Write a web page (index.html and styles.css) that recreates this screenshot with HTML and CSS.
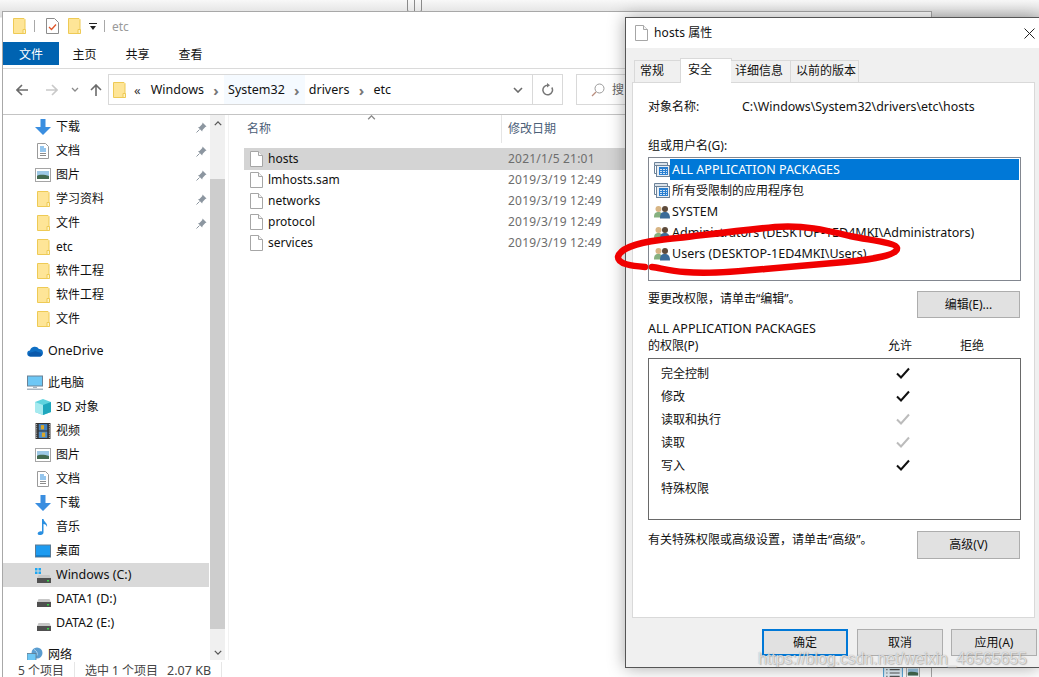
FILE: index.html
```html
<!DOCTYPE html>
<html lang="zh">
<head>
<meta charset="utf-8">
<title>hosts 属性</title>
<link rel="stylesheet" href="styles.css">
</head>
<body>
<svg class="defs" width="0" height="0" aria-hidden="true">
  <symbol id="i-folder" viewBox="0 0 13 16"><path d="M.5.5h10.5l1 1v14H.5z" fill="#fee597" stroke="#eeca55"/><path d="M10 11.500h2.500V15.500H10z" fill="#fff3c4" stroke="#eeca55"/></symbol>
  <symbol id="i-file" viewBox="0 0 13 16"><path d="M.5.5h8l4 4v11H.500z" fill="#fff" stroke="#a6a6a6"/><path d="M8.500.5v4h4" fill="#f4f4f4" stroke="#a6a6a6"/></symbol>
  <symbol id="i-check-doc" viewBox="0 0 13 16"><path d="M.5.5h8l4 4v11H.500z" fill="#fff" stroke="#8c8c8c"/><path d="M3 9l2.500 2.500L10 6.500" fill="none" stroke="#e0562a" stroke-width="1.300"/></symbol>
  <symbol id="i-down" viewBox="0 0 16 16"><path d="M5.500 0h5v8H16l-8 8-8-8h5.500z" fill="#3a8ee0"/></symbol>
  <symbol id="i-doc" viewBox="0 0 16 16"><path d="M2.500.5h8l3 3v12h-11z" fill="#fff" stroke="#9a9a9a"/><path d="M5 4h4M5 6h6M5 8h6" stroke="#2b8ddd"/><path d="M5 10.500h6M5 12.500h6" stroke="#8c8c8c"/></symbol>
  <symbol id="i-pic" viewBox="0 0 16 14"><rect x=".5" y=".5" width="15" height="13" fill="#fff" stroke="#a5a5a5"/><rect x="2" y="3" width="12" height="8" fill="#9cc8e6"/><path d="M2 8c3-2 8-1 12 0v3H2z" fill="#42694f"/></symbol>
  <symbol id="i-pin" viewBox="0 0 11 11"><path d="M6.500.5l4 4-1.200.6-2.800 2.900-.3 1.500L2 5.200l1.500-.3L6.300 2z" fill="#8c96a0"/><path d="M3.500 7.500L.5 10.500" stroke="#8c96a0"/></symbol>
  <symbol id="i-cloud" viewBox="0 0 16 12"><path d="M3.500 11.500a3 3 0 0 1-.5-6A5 5 0 0 1 12 4a3.800 3.800 0 0 1 1 7.500z" fill="#0f6fc4"/><path d="M3.500 11.500a2 2 0 0 1 0-4c2 0 4-2 6-1s3 .5 4.500 1.500 1 3.500-1 3.500z" fill="#0a59ab"/></symbol>
  <symbol id="i-pc" viewBox="0 0 16 15"><rect x=".5" y=".5" width="15" height="10" fill="#6dc7f5" stroke="#6a8296"/><path d="M6 11h4v1.500H6z" fill="#a6b4c0"/><path d="M0 13h16v1.500H0z" fill="#a6b4c0"/></symbol>
  <symbol id="i-cube" viewBox="0 0 16 16"><path d="M8 0l8 3v10l-8 3-8-3V3z" fill="#5fd3de"/><path d="M8 6l8-3v10l-8 3z" fill="#1fa7bd"/><path d="M0 3l8 3v10l-8-3z" fill="#a6eaef"/></symbol>
  <symbol id="i-film" viewBox="0 0 14 15"><rect width="14" height="15" fill="#333"/><rect x="3" y="1" width="8" height="6" fill="#3f7fc0"/><rect x="3" y="8" width="8" height="6" fill="#4d8cc8"/><path d="M5 2h3v4H5z" fill="#d8a628"/><path d="M6 9h3v4H6z" fill="#d8a628"/><path d="M1 1v13" stroke="#bbb" stroke-dasharray="1 1"/><path d="M13 1v13" stroke="#bbb" stroke-dasharray="1 1"/></symbol>
  <symbol id="i-note" viewBox="0 0 12 16"><path d="M5 0h1.500c.3 3 4.500 4 3.500 8-.5-2-2-3-3.500-3v8.500c0 2-2 2.500-4 2.500S0 14 1.500 13 4 12 5 12.500z" fill="#2a8fe0"/></symbol>
  <symbol id="i-desk" viewBox="0 0 16 13"><rect x=".5" y=".5" width="15" height="12" fill="#1d9bf0" stroke="#5c7a92"/><path d="M1 11h14v1H1z" fill="#0b66b0"/></symbol>
  <symbol id="i-drive" viewBox="0 0 14 8"><path d="M1.500 0h11L14 3.500H0z" fill="#c7c7c7"/><rect y="3" width="14" height="5" fill="#505050"/><rect x="10" y="5" width="2" height="1.500" fill="#37d648"/></symbol>
  <symbol id="i-win" viewBox="0 0 6 6"><path d="M0 0h2.500v2.500H0zM3.500 0H6v2.500H3.500zM0 3.500h2.500V6H0zM3.500 3.500H6V6H3.500z" fill="#1ea7f2"/></symbol>
  <symbol id="i-net" viewBox="0 0 16 15"><circle cx="10" cy="5.500" r="5.500" fill="#5a9dd0"/><path d="M7 2c2 1 4 3 3 6" stroke="#b9dcf2" fill="none"/><rect y="6" width="9" height="7" fill="#6dc7f5" stroke="#5d7a90" stroke-width=".8"/><path d="M2 14h5" stroke="#8c9aa6"/></symbol>
  <symbol id="i-pkg" viewBox="0 0 16 16"><path d="M.5.500h13v3H.5z" fill="#dbe3ea" stroke="#6d8298"/><path d="M.5 3.500v8h2" fill="none" stroke="#6d8298"/><rect x="2.500" y="3.500" width="13" height="11" fill="#e9eef3" stroke="#6d8298"/><rect x="5" y="5" width="9" height="8" fill="#2a7fd0"/><path d="M6 7.500h7M6 9.500h7M6 11.500h7" stroke="#cfe3f5" stroke-dasharray="2 1"/></symbol>
  <symbol id="i-users" viewBox="0 0 16 15"><circle cx="4.500" cy="4.500" r="3" fill="#d8b584"/><path d="M0 13c0-5 2-5.500 4.500-5.500S9 9 9 13z" fill="#86b07f"/><circle cx="11" cy="4.500" r="3" fill="#5d4a3a"/><path d="M6 14c0-6 2-6.500 5-6.500S16 9 16 14z" fill="#3b6b98"/></symbol>
  <symbol id="i-check" viewBox="0 0 14 12"><path d="M1 6.500l4 4L13 1.500" fill="none" stroke="currentColor" stroke-width="2"/></symbol>
  <symbol id="i-caret" viewBox="0 0 10 6"><path d="M1 5l4-4 4 4" fill="none" stroke="currentColor" stroke-width="1.600"/></symbol>
</svg>

<div class="book"></div>

<section class="explorer">
  <header class="qat">
    <svg class="ic13"><use href="#i-folder"/></svg>
    <span class="qsep"></span>
    <svg class="ic13 qdoc"><use href="#i-check-doc"/></svg>
    <svg class="ic13"><use href="#i-folder"/></svg>
    <span class="qdrop"></span>
    <span class="qsep"></span>
    <span class="qtitle">etc</span>
  </header>
  <nav class="ribbon">
    <span class="rtab active">文件</span>
    <span class="rtab">主页</span>
    <span class="rtab">共享</span>
    <span class="rtab">查看</span>
  </nav>
  <div class="navbar">
    <svg class="nav-arrow" viewBox="0 0 12 12"><path d="M6 1L1 6l5 5M1 6h11" fill="none" stroke="#6b6b6b" stroke-width="1.600"/></svg>
    <svg class="nav-arrow fwd" viewBox="0 0 12 12"><path d="M6 1l5 5-5 5M11 6H0" fill="none" stroke="#c9c9c9" stroke-width="1.600"/></svg>
    <svg class="nav-drop" viewBox="0 0 8 5"><path d="M1 1l3 3 3-3" fill="none" stroke="#8a8a8a" stroke-width="1.300"/></svg>
    <svg class="nav-arrow up" viewBox="0 0 12 12"><path d="M1 6l5-5 5 5M6 1v11" fill="none" stroke="#6b6b6b" stroke-width="1.600"/></svg>
    <div class="address">
      <svg class="ic13"><use href="#i-folder"/></svg>
      <span class="more">«</span>
      <span class="crumb first">Windows</span><span class="gt">›</span>
      <span class="crumb hover">System32</span><span class="gt hover">›</span>
      <span class="crumb">drivers</span><span class="gt">›</span>
      <span class="crumb">etc</span>
      <svg class="addr-drop" viewBox="0 0 10 6"><path d="M1 1l4 4 4-4" fill="none" stroke="#6b6b6b" stroke-width="1.600"/></svg>
    </div>
    <div class="refresh"><svg viewBox="0 0 12 13" width="12" height="13"><path d="M9.800 4.500A4.800 4.800 0 1 1 6 2.200" fill="none" stroke="#777" stroke-width="1.500"/><path d="M5 0l3 2.200L5 4.500z" fill="#777"/></svg></div>
    <div class="search"><svg viewBox="0 0 14 14" width="14" height="14"><circle cx="8.500" cy="5.500" r="4.500" fill="none" stroke="#9a9a9a"/><path d="M5 9l-4 4" stroke="#b98d7e" stroke-width="1.300"/></svg><span class="stext">搜</span></div>
  </div>
  <div class="main">
    <aside class="sidebar">
      <div class="tree">
        <div class="node sub"><svg class="ni"><use href="#i-down"/></svg><span class="nlabel">下载</span><svg class="pin"><use href="#i-pin"/></svg></div>
        <div class="node sub"><svg class="ni"><use href="#i-doc"/></svg><span class="nlabel">文档</span><svg class="pin"><use href="#i-pin"/></svg></div>
        <div class="node sub"><svg class="ni pic"><use href="#i-pic"/></svg><span class="nlabel">图片</span><svg class="pin"><use href="#i-pin"/></svg></div>
        <div class="node sub"><svg class="ni fold"><use href="#i-folder"/></svg><span class="nlabel">学习资料</span><svg class="pin"><use href="#i-pin"/></svg></div>
        <div class="node sub"><svg class="ni fold"><use href="#i-folder"/></svg><span class="nlabel">文件</span><svg class="pin"><use href="#i-pin"/></svg></div>
        <div class="node sub"><svg class="ni fold"><use href="#i-folder"/></svg><span class="nlabel">etc</span></div>
        <div class="node sub"><svg class="ni fold"><use href="#i-folder"/></svg><span class="nlabel">软件工程</span></div>
        <div class="node sub"><svg class="ni fold"><use href="#i-folder"/></svg><span class="nlabel">软件工程</span></div>
        <div class="node sub"><svg class="ni fold"><use href="#i-folder"/></svg><span class="nlabel">文件</span></div>
        <div class="node top gap"><svg class="ni"><use href="#i-cloud"/></svg><span class="nlabel lat">OneDrive</span></div>
        <div class="node top gap"><svg class="ni"><use href="#i-pc"/></svg><span class="nlabel">此电脑</span></div>
        <div class="node sub"><svg class="ni"><use href="#i-cube"/></svg><span class="nlabel">3D 对象</span></div>
        <div class="node sub"><svg class="ni"><use href="#i-film"/></svg><span class="nlabel">视频</span></div>
        <div class="node sub"><svg class="ni pic"><use href="#i-pic"/></svg><span class="nlabel">图片</span></div>
        <div class="node sub"><svg class="ni"><use href="#i-doc"/></svg><span class="nlabel">文档</span></div>
        <div class="node sub"><svg class="ni"><use href="#i-down"/></svg><span class="nlabel">下载</span></div>
        <div class="node sub"><svg class="ni"><use href="#i-note"/></svg><span class="nlabel">音乐</span></div>
        <div class="node sub"><svg class="ni"><use href="#i-desk"/></svg><span class="nlabel">桌面</span></div>
        <div class="node sub selected"><span class="ni drivewrap"><svg class="winlogo"><use href="#i-win"/></svg><svg class="drive"><use href="#i-drive"/></svg></span><span class="nlabel lat">Windows (C:)</span></div>
        <div class="node sub"><span class="ni drivewrap"><svg class="drive"><use href="#i-drive"/></svg></span><span class="nlabel lat">DATA1 (D:)</span></div>
        <div class="node sub"><span class="ni drivewrap"><svg class="drive"><use href="#i-drive"/></svg></span><span class="nlabel lat">DATA2 (E:)</span></div>
        <div class="node top gap"><svg class="ni"><use href="#i-net"/></svg><span class="nlabel">网络</span></div>
      </div>
      <div class="scrollbar">
        <div class="sb-btn"><svg class="sb-caret"><use href="#i-caret"/></svg></div>
        <div class="sb-gap"></div>
        <div class="sb-thumb"></div>
        <div class="sb-btn bottom"><svg class="sb-caret flip"><use href="#i-caret"/></svg></div>
      </div>
    </aside>
    <div class="files">
      <div class="fhead">
        <span class="col-name">名称</span>
        <svg class="sort"><use href="#i-caret"/></svg>
        <span class="col-date">修改日期</span>
      </div>
      <div class="frow selected"><svg class="fi"><use href="#i-file"/></svg><span class="fname">hosts</span><span class="fdate">2021/1/5 21:01</span></div>
      <div class="frow"><svg class="fi"><use href="#i-file"/></svg><span class="fname">lmhosts.sam</span><span class="fdate">2019/3/19 12:49</span></div>
      <div class="frow"><svg class="fi"><use href="#i-file"/></svg><span class="fname">networks</span><span class="fdate">2019/3/19 12:49</span></div>
      <div class="frow"><svg class="fi"><use href="#i-file"/></svg><span class="fname">protocol</span><span class="fdate">2019/3/19 12:49</span></div>
      <div class="frow"><svg class="fi"><use href="#i-file"/></svg><span class="fname">services</span><span class="fdate">2019/3/19 12:49</span></div>
    </div>
  </div>
  <footer class="status">
    <span class="st-a">5 个项目</span>
    <span class="st-b">选中 1 个项目</span>
    <span class="st-c lat">2.07 KB</span>
    <span class="viewbtns">
      <svg class="v-detail" viewBox="0 0 18 12"><rect x=".5" y=".5" width="17" height="14" fill="#e5f3fb" stroke="#5aa7d8"/><path d="M3 3h1M6 3h9M3 6h1M6 6h9M3 9h1M6 9h9" stroke="#555"/></svg>
      <svg class="v-pic"><use href="#i-pic"/></svg>
    </span>
  </footer>
</section>

<section class="dialog">
  <header class="dtitle">
    <svg class="ic13"><use href="#i-file"/></svg>
    <span class="dt-text">hosts 属性</span>
    <svg class="close" viewBox="0 0 11 11"><path d="M.5.500l10 10M10.500.500l-10 10" stroke="#222" fill="none"/></svg>
  </header>
  <div class="tabs">
    <span class="tab t1">常规</span>
    <span class="tab t2 on">安全</span>
    <span class="tab t3">详细信息</span>
    <span class="tab t4">以前的版本</span>
  </div>
  <div class="panel">
    <div class="objrow"><span class="objlabel">对象名称:</span><span class="path">C:\Windows\System32\drivers\etc\hosts</span></div>
    <div class="grp">组或用户名(G):</div>
    <div class="listbox">
      <div class="lrow sel"><svg class="li"><use href="#i-pkg"/></svg><span class="ltext lat">ALL APPLICATION PACKAGES</span></div>
      <div class="lrow"><svg class="li"><use href="#i-pkg"/></svg><span class="ltext">所有受限制的应用程序包</span></div>
      <div class="lrow"><svg class="li"><use href="#i-users"/></svg><span class="ltext lat">SYSTEM</span></div>
      <div class="lrow"><svg class="li"><use href="#i-users"/></svg><span class="ltext lat">Administrators (DESKTOP-1ED4MKI\Administrators)</span></div>
      <div class="lrow"><svg class="li"><use href="#i-users"/></svg><span class="ltext lat">Users (DESKTOP-1ED4MKI\Users)</span></div>
    </div>
    <div class="hint first"><span class="hint-t">要更改权限，请单击“编辑”。</span><button class="btn side">编辑(E)...</button></div>
    <div class="permhead lat">ALL APPLICATION PACKAGES</div>
    <div class="permcols"><span class="pc-l">的权限(P)</span><span class="pc-a">允许</span><span class="pc-d">拒绝</span></div>
    <div class="permbox">
      <div class="prow"><span class="pname">完全控制</span><svg class="ck"><use href="#i-check"/></svg></div>
      <div class="prow"><span class="pname">修改</span><svg class="ck"><use href="#i-check"/></svg></div>
      <div class="prow"><span class="pname">读取和执行</span><svg class="ck dim"><use href="#i-check"/></svg></div>
      <div class="prow"><span class="pname">读取</span><svg class="ck dim"><use href="#i-check"/></svg></div>
      <div class="prow"><span class="pname">写入</span><svg class="ck"><use href="#i-check"/></svg></div>
      <div class="prow"><span class="pname">特殊权限</span></div>
    </div>
    <div class="hint second"><span>有关特殊权限或高级设置，请单击“高级”。</span><button class="btn side tall">高级(V)</button></div>
  </div>
  <div class="actions">
    <button class="btn act primary">确定</button>
    <button class="btn act">取消</button>
    <button class="btn act">应用(A)</button>
  </div>
</section>

<svg class="scribble" viewBox="0 0 1039 677" aria-hidden="true">
  <path d="M645 267C632 266 618 264 618 257C620 249 635 243 660 240C690 237 725 232 775 227C805 225 825 230 850 236C875 241 896 243 897 248C898 255 875 259 845 262C810 265 785 267 765 269C735 272 705 274 685 272C670 271 660 268 652 267" fill="none" stroke="#f00000" stroke-width="6.500" stroke-linecap="round" stroke-linejoin="round"/>
</svg>
<div class="watermark">https://blog.csdn.net/weixin_46565655</div>
</body>
</html>
```

FILE: styles.css
```css
* { box-sizing: border-box; }
html, body { margin: 0; padding: 0; }
body {
  position: relative;
  width: 1039px;
  height: 677px;
  overflow: hidden;
  background: linear-gradient(#f8f8f8 0, #dcdcdc 17px, #fff 18px);
  font: 12px/18px "Noto Sans", "Noto Sans CJK SC", sans-serif;
  color: #111;
}
.defs { position: absolute; }
svg { display: block; flex: none; }
.ic13 { width: 13px; height: 16px; }
.lat { font-size: 12.500px; }

/* desktop strip behind the windows */
.book {
  position: absolute;
  left: 407px;
  top: -4px;
  width: 15px;
  height: 16px;
  border: 1px solid #8a8a8a;
  border-radius: 2px;
  background: linear-gradient(90deg, transparent 6px, #8a8a8a 6px, #8a8a8a 7px, transparent 7px);
}

/* Explorer window */
.explorer {
  position: absolute;
  left: 2px;
  top: 11px;
  width: 930px;
  height: 680px;
  background: #fff;
  border: 1px solid #a8a8a8;
  display: flex;
  flex-direction: column;
}
.qat { height: 30px; display: flex; align-items: center; padding: 0 0 2px 10px; flex: none; }
.qsep { width: 1px; height: 12px; background: #a8a8a8; margin: 0 7px 0 8px; }
.qdoc { margin: 0 9px 0 4px; }
.qdrop { width: 8px; height: 7px; margin-left: 8px; margin-right: -1px; background: linear-gradient(#222 0 1px, transparent 1px 3px, transparent 3px); position: relative; }
.qdrop::after { content: ""; position: absolute; left: 1px; top: 3px; border: 3px solid transparent; border-top: 4px solid #222; border-bottom: 0; }
.qtitle { color: #9a9a9a; padding-top: 2px; }
.ribbon { height: 23px; display: flex; flex: none; }
.rtab { width: 53px; text-align: center; line-height: 26px; }
.rtab.active { width: 56px; background: #0063b1; color: #fff; margin-right: -1px; }
.navbar {
  height: 47px;
  margin-top: 3px;
  border-top: 1px solid #dadada;
  border-bottom: 1px solid #c4c4c4;
  display: flex;
  align-items: center;
  padding: 0 0 4px 13px;
  flex: none;
}
.nav-arrow { width: 12px; height: 12px; }
.nav-arrow.fwd { margin-left: 18px; }
.nav-drop { width: 8px; height: 5px; margin-left: 13px; }
.nav-arrow.up { margin-left: 11px; }
.address {
  width: 425px;
  height: 31px;
  margin-left: 6px;
  border: 1px solid #d9d9d9;
  display: flex;
  align-items: center;
  padding-left: 4px;
  font-size: 12.500px;
}
.more { margin: 0 0 0 8px; font-size: 13px; color: #333; }
.crumb { height: 100%; display: flex; align-items: center; padding: 0 4px; }
.crumb.first { margin-left: 6px; }
.crumb.hover, .gt.hover { background: #f5faff; }
.gt { width: 16px; height: 100%; display: flex; align-items: center; justify-content: center; color: #777; font-size: 15px; font-weight: 700; }
.addr-drop { width: 10px; height: 6px; margin-left: auto; margin-right: 9px; }
.refresh { width: 31px; height: 31px; margin-left: -1px; border: 1px solid #d9d9d9; display: flex; align-items: center; justify-content: center; }
.search { width: 120px; height: 31px; margin-left: 13px; border: 1px solid #d9d9d9; display: flex; align-items: center; gap: 7px; padding-left: 14px; }
.stext { color: #666; }

.main { height: 545px; display: flex; flex: none; }
.sidebar { width: 226px; display: flex; border-right: 1px solid #f2f2f2; flex: none; overflow: hidden; }
.tree { width: 207px; flex: none; }
.node { height: 24px; display: flex; align-items: center; position: relative; }
.node.sub { padding-left: 32px; }
.node.top { padding-left: 24px; }
.node.gap { margin-top: 8px; }
.node.selected { background: #d9d9d9; margin-right: 1px; }
.ni { width: 16px; height: 16px; display: block; }
.ni.pic { height: 14px; }
.ni.fold { width: 13px; margin: 0 1px 0 2px; }
.nlabel { margin-left: 5px; white-space: nowrap; }
.pin { width: 11px; height: 11px; position: absolute; left: 193px; top: 7px; }
.drivewrap { position: relative; }
.drive { position: absolute; left: 2px; top: 8px; width: 14px; height: 8px; }
.winlogo { position: absolute; left: 0; top: 1px; width: 6px; height: 6px; }
.scrollbar { width: 15px; display: flex; flex-direction: column; background: #f0f0f0; flex: none; }
.sb-btn { height: 17px; display: flex; align-items: center; justify-content: center; flex: none; color: #555; }
.sb-gap { height: 47px; flex: none; }
.sb-thumb { height: 450px; background: #cdcdcd; flex: none; }
.sb-btn.bottom { margin-top: 15px; }
.sb-caret { width: 8px; height: 5px; }
.sb-caret.flip { transform: rotate(180deg); }
.files { flex: 1; padding-left: 15px; position: relative; }
.fhead { height: 34px; position: relative; color: #4c6078; }
.col-name { position: absolute; left: 3px; top: 4px; line-height: 20px; }
.col-date { position: absolute; left: 264px; top: 4px; line-height: 20px; }
.col-date::before { content: ""; position: absolute; left: -7px; top: -4px; width: 1px; height: 28px; background: #e5e5e5; }
.sort { position: absolute; left: 123px; top: 0; width: 9px; height: 5px; color: #888; }
.frow { height: 21px; display: flex; align-items: center; padding: 0 0 2px 6px; }
.frow.selected { background: #d4d4d4; box-shadow: 0 -1px 0 #d4d4d4; }
.fi { width: 13px; height: 16px; }
.fname { margin-left: 5px; width: 240px; white-space: nowrap; }
.fdate { color: #6d6d6d; white-space: nowrap; letter-spacing: .2px; }
.status { height: 22px; display: flex; align-items: flex-start; padding: 2px 0 0 15px; color: #444; position: relative; flex: none; }
.st-a { width: 57px; border-right: 1px solid #e6e6e6; height: 17px; }
.st-b { margin-left: 10px; }
.st-c { margin-left: 9px; padding-right: 10px; border-right: 1px solid #e6e6e6; height: 17px; }
.viewbtns { position: absolute; left: 880px; top: 6px; display: flex; gap: 3px; }
.v-detail { width: 20px; height: 14px; }
.v-pic { width: 14px; height: 12px; }

/* Properties dialog */
.dialog {
  position: absolute;
  left: 625px;
  top: 17px;
  width: 414px;
  height: 651px;
  background: #f0f0f0;
  border: 1px solid #555;
  border-right: 0;
  box-shadow: 0 0 16px rgba(0,0,0,.35);
}
.dtitle { height: 30px; background: #fff; display: flex; align-items: center; padding-left: 9px; }
.dt-text { margin-left: 6px; letter-spacing: .1px; }
.close { width: 11px; height: 11px; margin-left: auto; margin-right: 4px; }
.tabs { display: flex; align-items: flex-end; height: 34px; margin-left: 8px; position: relative; z-index: 1; }
.tab { height: 22px; background: #f0f0f0; border: 1px solid #d9d9d9; border-bottom: 0; line-height: 19px; }
.tab.t1 { width: 46px; padding-left: 5px; border-right: 0; }
.tab.t2 { width: 52px; height: 25px; padding-left: 7px; background: #fff; margin-bottom: -1px; border-bottom: 0; line-height: 22px; }
.tab.t3 { width: 59px; padding-left: 4px; margin-left: -1px; border-left: 0; border-right: 0; }
.tab.t4 { width: 69px; padding-left: 5px; }
.panel { width: 403px; height: 536px; margin-left: 6px; background: #fff; border: 1px solid #d9d9d9; padding: 15px 13px 0 15px; }
.objrow { display: flex; }
.objlabel { width: 94px; }
.path { font-size: 12.400px; }
.grp { margin-top: 21px; }
.listbox { height: 124px; margin-top: 2px; border: 1px solid #828790; padding: 1px; }
.lrow { height: 21px; display: flex; align-items: center; padding-left: 4px; }
.li { width: 16px; height: 16px; }
.ltext { padding-left: 2px; flex: 1; height: 21px; line-height: 22px; white-space: nowrap; }
.lrow.sel .ltext { background: #0078d7; color: #fff; }
.hint { display: flex; justify-content: space-between; align-items: flex-start; }
.hint.first { margin-top: 10px; height: 29px; }
.hint.second { margin-top: 11px; }
.hint-t { margin-top: -1px; }
.btn { font: inherit; color: #111; background: #e1e1e1; border: 1px solid #adadad; padding: 0; }
.btn.side { width: 103px; height: 27px; margin-right: 1px; }
.btn.side.tall { height: 28px; }
.permhead { line-height: 17px; }
.permcols { position: relative; height: 17px; line-height: 17px; }
.pc-a { position: absolute; left: 240px; }
.pc-d { position: absolute; left: 312px; }
.permbox { height: 162px; margin-top: 4px; border: 1px solid #696969; padding: 3px 0 0 12px; }
.prow { height: 23px; display: flex; align-items: center; position: relative; }
.ck { position: absolute; left: 235px; top: 5px; width: 14px; height: 12px; color: #111; }
.ck.dim { color: #bcbcbc; }
.actions { display: flex; margin: 11px 0 0 136px; gap: 8px; }
.btn.act { width: 86px; height: 27px; }
.btn.primary { border: 2px solid #0078d7; margin-right: 1px; }

/* Overlays */
.scribble { position: absolute; left: 0; top: 0; width: 1039px; height: 677px; pointer-events: none; }
.watermark {
  position: absolute;
  left: 758px;
  top: 647px;
  font: 15.800px/24px "Liberation Sans", sans-serif;
  color: rgba(255,255,255,.7);
  text-shadow: 0 0 1px rgba(90,90,90,.6), 1px 1px 1px rgba(120,120,120,.4);
  white-space: nowrap;
}
```
